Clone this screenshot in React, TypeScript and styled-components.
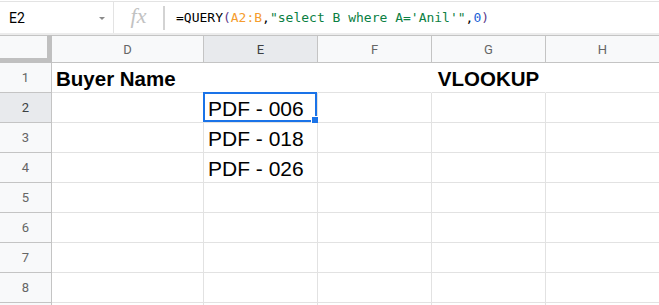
import { Fragment } from "react";
import styled, { createGlobalStyle } from "styled-components";

const GlobalStyle = createGlobalStyle`
  html, body {
    margin: 0;
    padding: 0;
    background: #ffffff;
    overflow: hidden;
  }
  body {
    font-family: "Liberation Sans", Arial, sans-serif;
  }
`;

const Page = styled.div`
  width: 659px;
  height: 305px;
  overflow: hidden;
  background: #fff;
`;

const FormulaBar = styled.div`
  display: flex;
  align-items: center;
  height: 31px;
  border-top: 1px solid #e3e3e3;
  margin-top: 1px;
  border-bottom: 2px solid #ececec;
  background: #fff;
`;

const NameBox = styled.div`
  display: flex;
  align-items: center;
  justify-content: space-between;
  width: 114px;
  height: 100%;
  box-sizing: border-box;
  padding: 0 8px 0 9px;
  border-right: 1px solid #e3e3e3;
  font-family: Roboto, "Liberation Sans", sans-serif;
  font-size: 14px;
  color: #000;
`;

const Caret = styled.span`
  width: 0;
  height: 0;
  border-left: 3px solid transparent;
  border-right: 3px solid transparent;
  border-top: 3px solid #8a8a8a;
  margin-top: 1px;
`;

const FxLabel = styled.div`
  width: 49px;
  text-align: center;
  font-family: "Liberation Serif", "DejaVu Serif", serif;
  font-style: italic;
  font-size: 22px;
  color: #c2c2c2;
  padding-bottom: 3px;
`;

const FxDivider = styled.div`
  width: 2px;
  height: 24px;
  background: #d3d3d3;
  margin-right: 11px;
`;

const Formula = styled.div`
  font-family: "DejaVu Sans Mono", "Liberation Mono", monospace;
  font-size: 13px;
  white-space: pre;
  color: #000;
`;

type TokenKind = "fn" | "paren" | "range" | "str" | "num";

const tokenColors: Record<TokenKind, string> = {
  fn: "#000",
  paren: "#5e3a8c",
  range: "#f59c2e",
  str: "#0b8043",
  num: "#1a62d6",
};

const Token = styled.span<{ $kind: TokenKind }>`
  color: ${(p) => tokenColors[p.$kind]};
`;

const Grid = styled.div`
  display: grid;
  grid-template-columns: 52px 152px 114px 114px 114px 114px;
  grid-template-rows: 28px;
  grid-auto-rows: 30px;
`;

const Corner = styled.div`
  box-sizing: border-box;
  background: #f8f9fa;
  border-top: 1px solid #c4c4c4;
  border-right: 5px solid #c0c0c0;
  border-bottom: 5px solid #c0c0c0;
`;

const ColHeader = styled.div<{ $active?: boolean }>`
  box-sizing: border-box;
  display: flex;
  align-items: center;
  justify-content: center;
  background: ${(p) => (p.$active ? "#e8eaed" : "#f8f9fa")};
  color: ${(p) => (p.$active ? "#3c4043" : "#666")};
  border-top: 1px solid #c4c4c4;
  border-right: 1px solid #c4c4c4;
  border-bottom: 1px solid #c4c4c4;
  font-family: Roboto, "Liberation Sans", sans-serif;
  font-size: 13px;
`;

const RowHeader = styled.div<{ $active?: boolean }>`
  box-sizing: border-box;
  display: flex;
  align-items: center;
  justify-content: center;
  background: ${(p) => (p.$active ? "#e8eaed" : "#f8f9fa")};
  color: ${(p) => (p.$active ? "#3c4043" : "#666")};
  border-right: 1px solid #c4c4c4;
  border-bottom: 1px solid #c4c4c4;
  font-family: Roboto, "Liberation Sans", sans-serif;
  font-size: 13px;
`;

const Cell = styled.div<{
  $bold?: boolean;
  $center?: boolean;
  $open?: boolean;
}>`
  position: relative;
  box-sizing: border-box;
  display: flex;
  align-items: flex-end;
  justify-content: ${(p) => (p.$center ? "center" : "flex-start")};
  padding: 0 4px 3px 4px;
  border-right: 1px solid ${(p) => (p.$open ? "transparent" : "#e2e2e2")};
  border-bottom: 1px solid #e2e2e2;
  font-family: "Liberation Sans", Arial, sans-serif;
  font-size: ${(p) => (p.$bold ? "20.5px" : "21px")};
  font-weight: ${(p) => (p.$bold ? 700 : 400)};
  color: #000;
  white-space: nowrap;
  line-height: 1;
`;

const Selection = styled.div`
  position: absolute;
  left: -1px;
  top: -1px;
  right: 0;
  bottom: 0;
  border: 2px solid #1a73e8;
  pointer-events: none;
`;

const Handle = styled.div`
  position: absolute;
  right: -4px;
  bottom: -4px;
  width: 6px;
  height: 6px;
  background: #1a73e8;
  border: 1px solid #fff;
`;

const columns = ["D", "E", "F", "G", "H"];

const data: Record<number, Record<string, string>> = {
  1: { D: "Buyer Name", G: "VLOOKUP" },
  2: { E: "PDF - 006" },
  3: { E: "PDF - 018" },
  4: { E: "PDF - 026" },
};

export default function App() {
  // row 9 only peeks in at the bottom edge, so its number is left off
  const rows = [1, 2, 3, 4, 5, 6, 7, 8, 9];

  return (
    <Page>
      <GlobalStyle />
      <FormulaBar>
        <NameBox>
          <span>E2</span>
          <Caret />
        </NameBox>
        <FxLabel>fx</FxLabel>
        <FxDivider />
        <Formula>
          <Token $kind="fn">=QUERY</Token>
          <Token $kind="paren">(</Token>
          <Token $kind="range">A2:B</Token>
          <Token $kind="fn">,</Token>
          <Token $kind="str">"select B where A='Anil'"</Token>
          <Token $kind="fn">,</Token>
          <Token $kind="num">0</Token>
          <Token $kind="paren">)</Token>
        </Formula>
      </FormulaBar>

      <Grid>
        <Corner />
        {columns.map((c) => (
          <ColHeader key={c} $active={c === "E"}>
            {c}
          </ColHeader>
        ))}

        {rows.map((r) => (
          <Fragment key={r}>
            <RowHeader $active={r === 2}>{r < 9 ? r : ""}</RowHeader>
            {columns.map((c) => {
              const value = data[r]?.[c] ?? "";
              const isSel = r === 2 && c === "E";
              return (
                <Cell
                  key={`${c}${r}`}
                  $bold={r === 1}
                  $center={r === 1 && c === "G"}
                  $open={r === 1}
                >
                  {value}
                  {isSel && (
                    <Selection>
                      <Handle />
                    </Selection>
                  )}
                </Cell>
              );
            })}
          </Fragment>
        ))}
      </Grid>
    </Page>
  );
}
